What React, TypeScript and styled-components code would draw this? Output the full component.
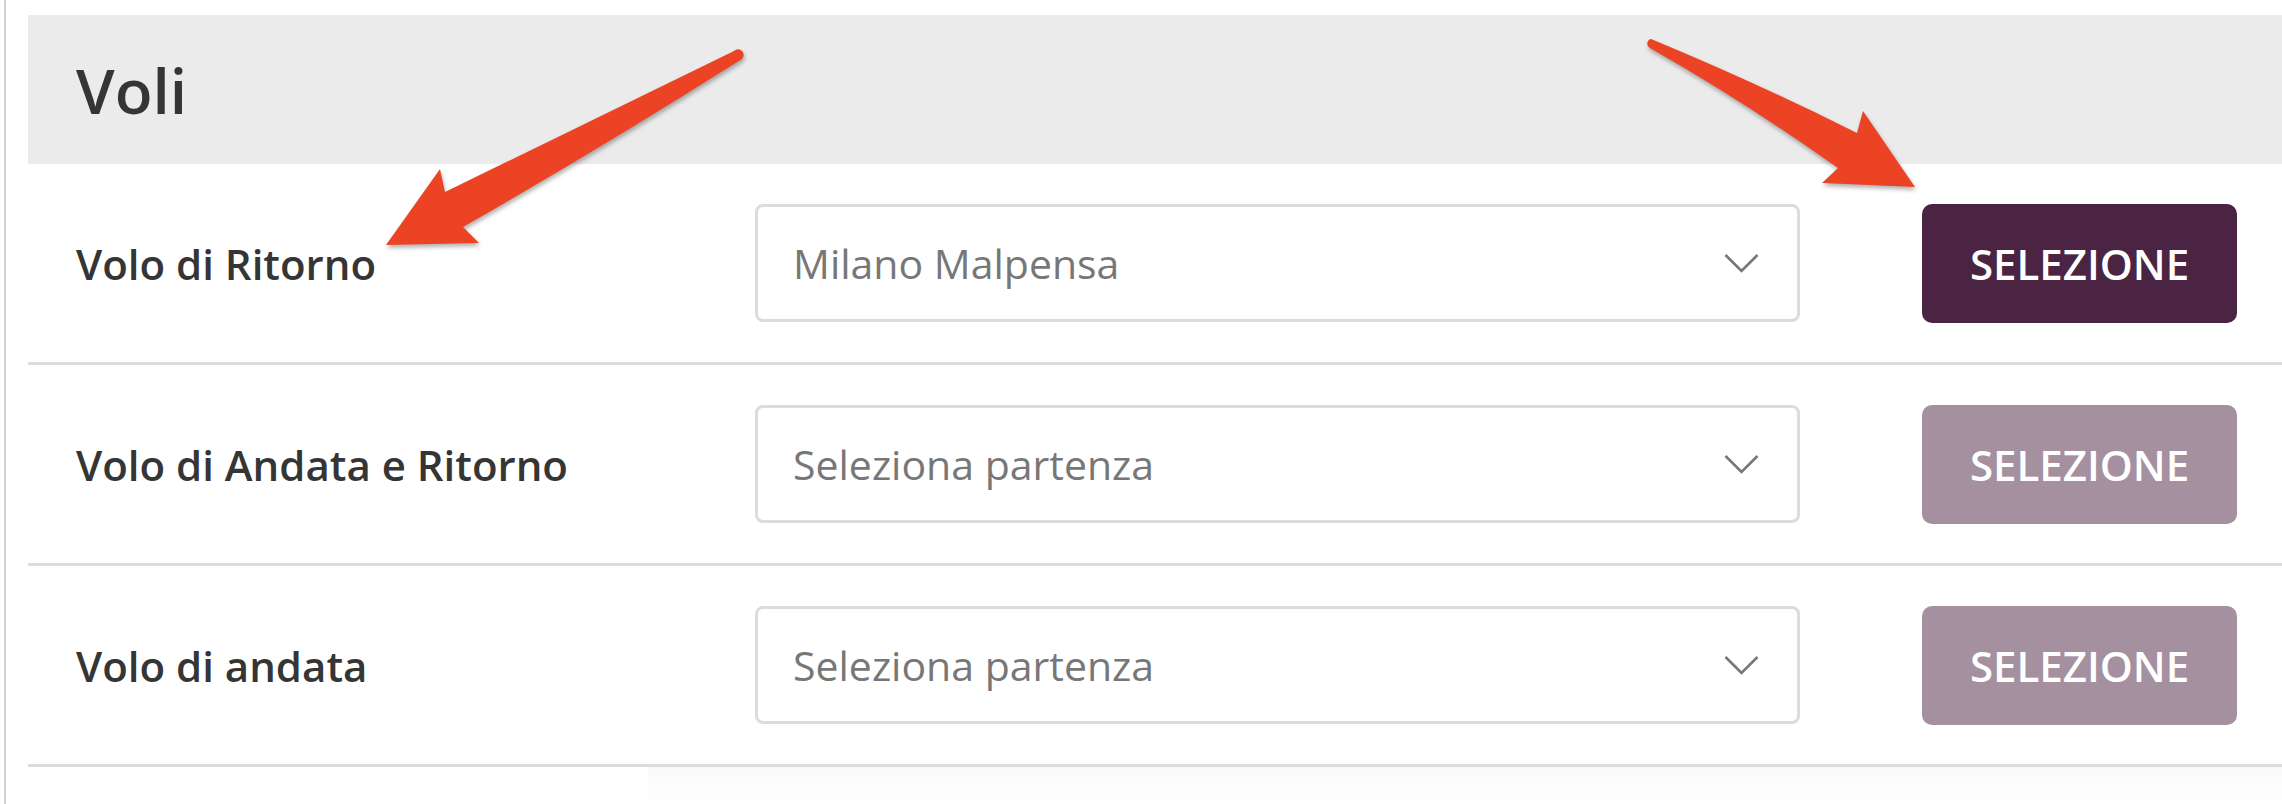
import React from "react";
import styled, { createGlobalStyle } from "styled-components";

const textColor = '#353535';
const lineColor = '#dcdcdc';
const arrowColor = '#ec4324';

const GlobalStyle = createGlobalStyle`
  html, body {
    margin: 0;
    padding: 0;
    background: #ffffff;
    font-family: "Open Sans", "Noto Sans", sans-serif;
  }
`;

const Root = styled.div`
  position: relative;
  width: 2282px;
  height: 804px;
  overflow: hidden;
`;

const Page = styled.div`
  box-sizing: border-box;
  margin-left: 4px;
  height: 100%;
  border-left: 2px solid #d2d2d2;
  padding: 15px 0 0 22px;
`;

const Header = styled.div`
  height: 149px;
  background-color: #ebebeb;
  display: flex;
  align-items: center;
  padding-left: 48px;
`;

const Title = styled.h2`
  margin: 0;
  font-size: 62px;
  font-weight: 600;
  color: ${textColor};
`;

const Row = styled.div`
  display: grid;
  grid-template-columns: 679px 1045px 1fr;
  align-items: center;
  height: 198px;
  padding: 0 45px 0 48px;
  border-bottom: 3px solid ${lineColor};
`;

const Label = styled.span`
  font-size: 42px;
  font-weight: 600;
  color: ${textColor};
`;

const Select = styled.div`
  box-sizing: border-box;
  height: 118px;
  display: flex;
  align-items: center;
  justify-content: space-between;
  padding: 0 38px 0 35px;
  border: 3px solid ${lineColor};
  border-radius: 8px;
  background: #ffffff;
`;

const SelectText = styled.span`
  font-size: 41px;
  color: #777777;
`;

interface ButtonProps {
  $active?: boolean;
}
const Button = styled.button<ButtonProps>`
  justify-self: end;
  width: 315px;
  height: 119px;
  border: none;
  border-radius: 10px;
  background-color: ${props => (props.$active ? '#4a2442' : '#a4909f')};
  color: #ffffff;
  font-family: "Open Sans", sans-serif;
  font-size: 42px;
  font-weight: 600;
  text-transform: uppercase;
  padding: 0;
`;

const Shade = styled.div`
  height: 37px;
  margin-left: 620px;
  background: linear-gradient(to bottom, #f9f9f9, #ffffff);
`;

const Overlay = styled.svg`
  position: absolute;
  top: 0;
  left: 0;
  pointer-events: none;
  filter: drop-shadow(1px 3px 2px rgba(0, 0, 0, 0.3));
`;

const Chevron = () => (
  <svg width="35" height="20" viewBox="0 0 35 20">
    <path d="M1.5 2 L17.5 18 L33.5 2" fill="none" stroke="#777777" strokeWidth="2.6" />
  </svg>
);

const flights = [
  { label: 'Volo di Ritorno', value: 'Milano Malpensa', active: true },
  { label: 'Volo di Andata e Ritorno', value: 'Seleziona partenza', active: false },
  { label: 'Volo di andata', value: 'Seleziona partenza', active: false },
];

export default function App() {
  return (
    <Root>
      <GlobalStyle />
      <Page>
        <Header>
          <Title>Voli</Title>
        </Header>
        {flights.map(f => (
          <Row key={f.label}>
            <Label>{f.label}</Label>
            <Select>
              <SelectText>{f.value}</SelectText>
              <Chevron />
            </Select>
            <Button $active={f.active}>Selezione</Button>
          </Row>
        ))}
        <Shade />
      </Page>
      <Overlay width="2282" height="804" viewBox="0 0 2282 804">
        <path
          fill={arrowColor}
          d="M734 51 L445 192 L440 169 L386 245 L479 243 L463 227 Q598 150 742 59 A4.5 4.5 0 0 0 734 51 Z"
        />
        <path
          fill={arrowColor}
          d="M1651 39 Q1755 82 1857 133 L1863 111 L1915 187 L1822 183 L1838 168 Q1745 102 1650 48 A4.8 4.8 0 0 1 1651 39 Z"
        />
      </Overlay>
    </Root>
  );
}
